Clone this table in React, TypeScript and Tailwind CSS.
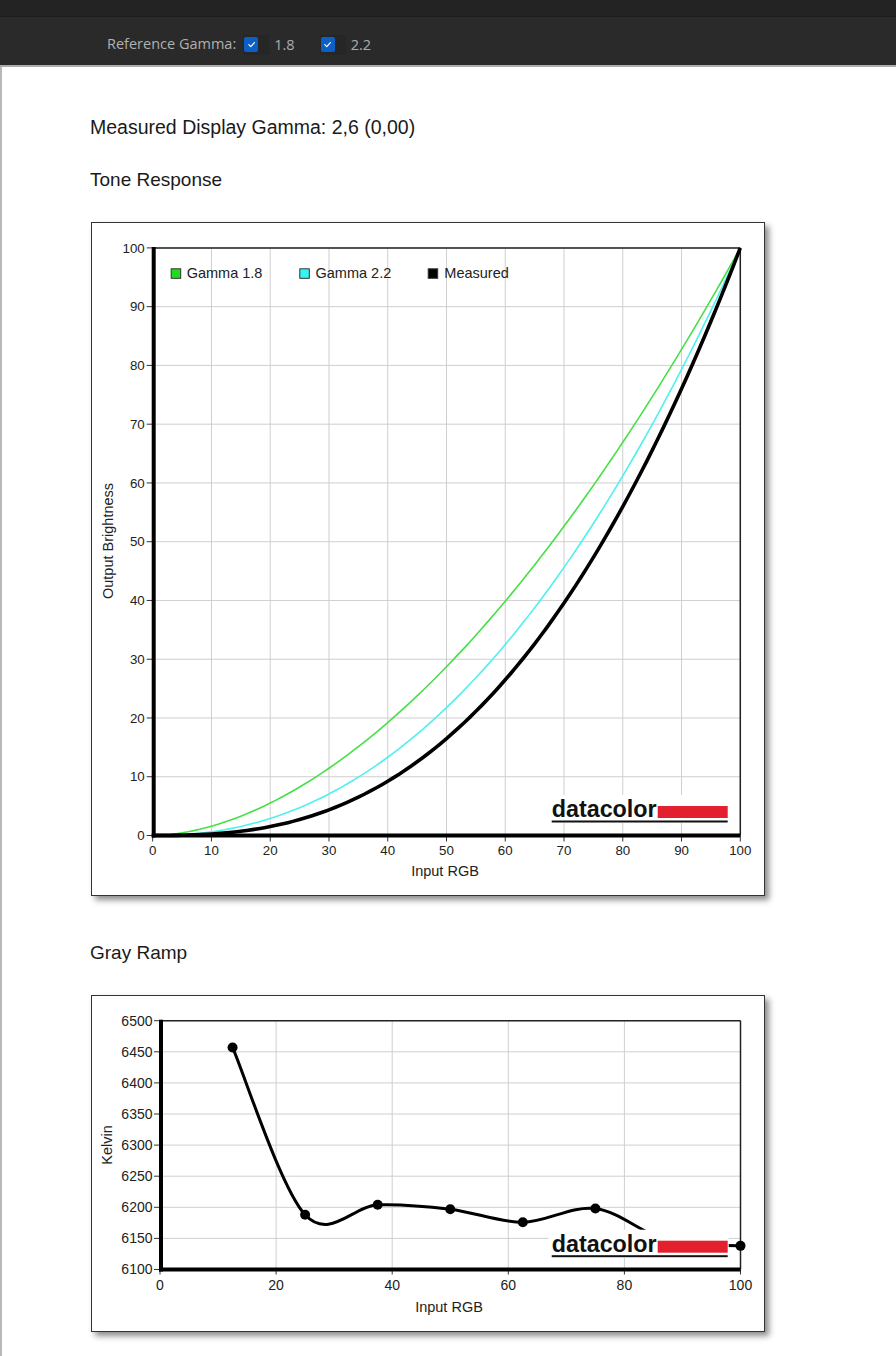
import React from "react";

type Pt = [number, number];

function catmull(pts: Pt[]): string {
  let d = `M${pts[0][0]},${pts[0][1]}`;
  for (let i = 0; i < pts.length - 1; i++) {
    const p0 = pts[i - 1] || pts[i];
    const p1 = pts[i];
    const p2 = pts[i + 1];
    const p3 = pts[i + 2] || p2;
    const c1x = p1[0] + (p2[0] - p0[0]) / 6;
    const c1y = p1[1] + (p2[1] - p0[1]) / 6;
    const c2x = p2[0] - (p3[0] - p1[0]) / 6;
    const c2y = p2[1] - (p3[1] - p1[1]) / 6;
    d += ` C${c1x.toFixed(2)},${c1y.toFixed(2)} ${c2x.toFixed(2)},${c2y.toFixed(2)} ${p2[0].toFixed(2)},${p2[1].toFixed(2)}`;
  }
  return d;
}

const FONT = '"Liberation Sans", Arial, sans-serif';

function Logo({ x, base }: { x: number; base: number }) {
  return (
    <g>
      <rect x={x - 3} y={base - 22} width={180} height={28} fill="#fff" />
      <text
        x={x}
        y={base}
        fontFamily={FONT}
        fontWeight={700}
        fontSize={23}
        fill="#111"
        textLength={105}
        lengthAdjust="spacingAndGlyphs"
      >
        datacolor
      </text>
      <rect x={x + 106} y={base - 11} width={70} height={12} fill="#e3202e" />
      <rect x={x} y={base + 3.5} width={176} height={2} fill="#111" />
    </g>
  );
}

function ToneChart() {
  const s = 5.876;
  const x0 = 60.7;
  const y0 = 612.5;
  const fx = (v: number) => x0 + v * s;
  const fy = (v: number) => y0 - v * s;
  const ticks = [0, 10, 20, 30, 40, 50, 60, 70, 80, 90, 100];
  const curve = (g: number) => {
    const pts: string[] = [];
    for (let i = 0; i <= 100; i += 1) {
      const v = 100 * Math.pow(i / 100, g);
      pts.push(`${fx(i).toFixed(2)},${fy(v).toFixed(2)}`);
    }
    return pts.join(" ");
  };
  return (
    <svg width={672} height={672} viewBox="0 0 672 672" className="block">
      {ticks.map((t) => (
        <line key={"v" + t} x1={fx(t)} x2={fx(t)} y1={fy(100)} y2={fy(0)} stroke="#cfcfcf" strokeWidth={1} />
      ))}
      {ticks.map((t) => (
        <line key={"h" + t} x1={fx(0)} x2={fx(100)} y1={fy(t)} y2={fy(t)} stroke="#cfcfcf" strokeWidth={1} />
      ))}
      <line x1={fx(0)} x2={fx(100)} y1={fy(100)} y2={fy(100)} stroke="#222" strokeWidth={1.5} />
      <line x1={fx(100)} x2={fx(100)} y1={fy(100)} y2={fy(0)} stroke="#222" strokeWidth={1.5} />
      {ticks.map((t) => (
        <g key={"t" + t}>
          <line x1={fx(0) - 6} x2={fx(0)} y1={fy(t)} y2={fy(t)} stroke="#333" strokeWidth={1} />
          <line x1={fx(t)} x2={fx(t)} y1={fy(0)} y2={fy(0) + 6} stroke="#333" strokeWidth={1} />
          <text x={fx(0) - 8} y={fy(t)} dy="0.35em" textAnchor="end" fontFamily={FONT} fontSize={13.3} fill="#222">
            {t}
          </text>
          <text x={fx(t)} y={fy(0) + 19.5} textAnchor="middle" fontFamily={FONT} fontSize={13.3} fill="#222">
            {t}
          </text>
        </g>
      ))}
      <polyline points={curve(1.8)} fill="none" stroke="#45e045" strokeWidth={1.6} />
      <polyline points={curve(2.2)} fill="none" stroke="#4ef0f0" strokeWidth={1.6} />
      <polyline points={curve(2.6)} fill="none" stroke="#000" strokeWidth={3.6} strokeLinejoin="round" />
      <line x1={fx(0) + 1} x2={fx(0) + 1} y1={fy(100) - 1} y2={fy(0) + 2} stroke="#000" strokeWidth={4} />
      <line x1={fx(0) - 1} x2={fx(100)} y1={fy(0)} y2={fy(0)} stroke="#000" strokeWidth={4} />

      <rect x={79.2} y={45.8} width={9.5} height={9.5} fill="#1fdc1f" stroke="#333" strokeWidth={1} />
      <text x={94.7} y={55.3} fontFamily={FONT} fontSize={14.5} fill="#222">Gamma 1.8</text>
      <rect x={207.8} y={45.8} width={9.5} height={9.5} fill="#38f5f5" stroke="#333" strokeWidth={1} />
      <text x={223.5} y={55.3} fontFamily={FONT} fontSize={14.5} fill="#222">Gamma 2.2</text>
      <rect x={336.2} y={45.8} width={9.5} height={9.5} fill="#000" stroke="#333" strokeWidth={1} />
      <text x={352.3} y={55.3} fontFamily={FONT} fontSize={14.5} fill="#222">Measured</text>

      <text x={353} y={653} textAnchor="middle" fontFamily={FONT} fontSize={14.5} fill="#222">Input RGB</text>
      <text
        x={0}
        y={0}
        transform="translate(21 318) rotate(-90)"
        textAnchor="middle"
        fontFamily={FONT}
        fontSize={14.5}
        fill="#222"
      >
        Output Brightness
      </text>
      <Logo x={459.7} base={594} />
    </svg>
  );
}

function RampChart() {
  const x0 = 68;
  const sx = 5.805;
  const fx = (v: number) => x0 + v * sx;
  const fy = (v: number) => 273.5 - (v - 6100) * 0.622;
  const yt = [6100, 6150, 6200, 6250, 6300, 6350, 6400, 6450, 6500];
  const xt = [0, 20, 40, 60, 80, 100];
  const data: Pt[] = [
    [12.5, 6457],
    [25, 6188],
    [37.5, 6204],
    [50, 6197],
    [62.5, 6176],
    [75, 6198],
    [87.5, 6146],
    [100, 6138],
  ];
  const pts: Pt[] = data.map(([a, b]) => [fx(a), fy(b)]);
  return (
    <svg width={672} height={335} viewBox="0 0 672 335" className="block">
      {xt.map((t) => (
        <line key={"v" + t} x1={fx(t)} x2={fx(t)} y1={fy(6500)} y2={fy(6100)} stroke="#cfcfcf" strokeWidth={1} />
      ))}
      {yt.map((t) => (
        <line key={"h" + t} x1={fx(0)} x2={fx(100)} y1={fy(t)} y2={fy(t)} stroke="#cfcfcf" strokeWidth={1} />
      ))}
      <line x1={fx(0)} x2={fx(100)} y1={fy(6500)} y2={fy(6500)} stroke="#222" strokeWidth={1.5} />
      <line x1={fx(100)} x2={fx(100)} y1={fy(6500)} y2={fy(6100)} stroke="#222" strokeWidth={1.5} />
      {yt.map((t) => (
        <g key={"yl" + t}>
          <line x1={fx(0) - 6} x2={fx(0)} y1={fy(t)} y2={fy(t)} stroke="#333" strokeWidth={1} />
          <text x={fx(0) - 7.5} y={fy(t)} dy="0.35em" textAnchor="end" fontFamily={FONT} fontSize={14} fill="#222">
            {t}
          </text>
        </g>
      ))}
      {xt.map((t) => (
        <g key={"xl" + t}>
          <line x1={fx(t)} x2={fx(t)} y1={fy(6100)} y2={fy(6100) + 5} stroke="#333" strokeWidth={1} />
          <text x={fx(t)} y={294} textAnchor="middle" fontFamily={FONT} fontSize={14} fill="#222">
            {t}
          </text>
        </g>
      ))}
      <path d={catmull(pts)} fill="none" stroke="#000" strokeWidth={3} strokeLinejoin="round" />
      {pts.map((p, i) => (
        <circle key={i} cx={p[0]} cy={p[1]} r={5} fill="#000" />
      ))}
      <line x1={fx(0) + 1} x2={fx(0) + 1} y1={fy(6500) - 1} y2={fy(6100) + 2} stroke="#000" strokeWidth={4} />
      <line x1={fx(0) - 1} x2={fx(100)} y1={fy(6100)} y2={fy(6100)} stroke="#000" strokeWidth={4} />
      <text x={357} y={316} textAnchor="middle" fontFamily={FONT} fontSize={14.5} fill="#222">Input RGB</text>
      <text
        x={0}
        y={0}
        transform="translate(20 149) rotate(-90)"
        textAnchor="middle"
        fontFamily={FONT}
        fontSize={14.5}
        fill="#222"
      >
        Kelvin
      </text>
      <Logo x={459.7} base={255.7} />
    </svg>
  );
}

function Check({ label }: { label: string }) {
  return (
    <div className="flex items-center">
      <div className="flex h-[20px] w-[26px] items-center bg-[#262626] pl-[1px]">
        <div className="flex h-[15px] w-[14px] items-center justify-center rounded-[2px] bg-[#0d5fc8]">
          <svg width="9" height="9" viewBox="0 0 10 10">
            <path d="M2 5.2 L4.2 7.3 L8.2 2.8" fill="none" stroke="#fff" strokeWidth="1.3" strokeLinecap="round" strokeLinejoin="round" />
          </svg>
        </div>
      </div>
      <span className="ml-[5px] text-[14.5px] text-[#acacac]">{label}</span>
    </div>
  );
}

export default function App() {
  return (
    <div className="min-h-[1356px] w-[896px] bg-white" style={{ fontFamily: FONT }}>
      <div className="h-[17px] border-b border-[#1b1b1b] bg-[#232323]" />
      <div
        className="flex h-[50px] items-start border-b-2 border-[#acacac] bg-[#2a2a2a] pl-[107px] pt-[17px]"
        style={{ fontFamily: '"Open Sans", "Noto Sans", sans-serif' }}
      >
        <span className="mr-[7px] text-[14.5px] leading-[20px] text-[#b0b0b0]">Reference Gamma:</span>
        <Check label="1.8" />
        <div className="w-[25px]" />
        <Check label="2.2" />
      </div>
      <div className="min-h-[1289px] border-l-2 border-[#b8b8b8] pl-[88px] pt-[49px]">
        <div className="text-[19.5px] leading-[22px] text-[#1a1a1a]">Measured Display Gamma: 2,6 (0,00)</div>
        <div className="mt-[31px] text-[19px] leading-[22px] text-[#1a1a1a]">Tone Response</div>
        <div className="mt-[31px] ml-[1px] w-[674px] border border-[#333] bg-white shadow-[4px_4px_6px_rgba(0,0,0,0.45)]">
          <ToneChart />
        </div>
        <div className="mt-[46px] text-[19px] leading-[22px] text-[#1a1a1a]">Gray Ramp</div>
        <div className="mt-[31px] ml-[1px] w-[674px] border border-[#333] bg-white shadow-[4px_4px_6px_rgba(0,0,0,0.45)]">
          <RampChart />
        </div>
      </div>
    </div>
  );
}
